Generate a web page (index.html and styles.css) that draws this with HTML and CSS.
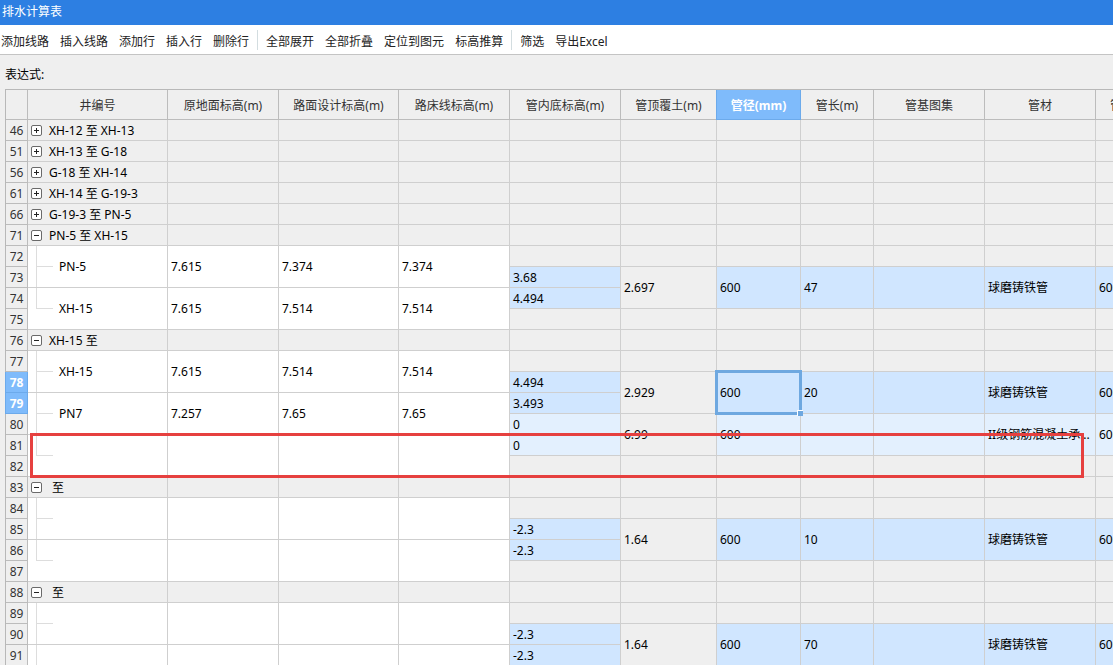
FILE: index.html
```html
<!DOCTYPE html>
<html lang="zh-CN">
<head>
    <meta charset="UTF-8">
    <meta name="viewport" content="width=device-width, initial-scale=1.0">
    <title>排水计算表</title>
    <link rel="stylesheet" href="styles.css">
</head>
<body>
    <header class="titlebar">排水计算表</header>
    <nav class="toolbar">
        <button type="button">添加线路</button>
        <button type="button">插入线路</button>
        <button type="button">添加行</button>
        <button type="button">插入行</button>
        <button type="button">删除行</button>
        <span class="separator"></span>
        <button type="button">全部展开</button>
        <button type="button">全部折叠</button>
        <button type="button">定位到图元</button>
        <button type="button">标高推算</button>
        <span class="separator"></span>
        <button type="button">筛选</button>
        <button type="button">导出Excel</button>
    </nav>
    <div class="expression">表达式:</div>
    <main class="sheet">
        <table class="grid">
            <colgroup>
                <col class="col-num">
                <col class="col-name">
                <col class="col-wide">
                <col class="col-design">
                <col class="col-wide">
                <col class="col-wide">
                <col class="col-cover">
                <col class="col-diameter">
                <col class="col-length">
                <col class="col-wide">
                <col class="col-wide">
                <col class="col-wide">
            </colgroup>
            <thead>
                <tr>
                    <th></th>
                    <th scope="col">井编号</th>
                    <th scope="col">原地面标高(m)</th>
                    <th scope="col">路面设计标高(m)</th>
                    <th scope="col">路床线标高(m)</th>
                    <th scope="col">管内底标高(m)</th>
                    <th scope="col">管顶覆土(m)</th>
                    <th scope="col" class="active">管径(mm)</th>
                    <th scope="col">管长(m)</th>
                    <th scope="col">管基图集</th>
                    <th scope="col">管材</th>
                    <th scope="col" class="cut">管</th>
                </tr>
            </thead>
            <tbody>
                <tr><th scope="row">46</th><td class="group"><button type="button" class="toggle plus" aria-label="展开"></button>XH-12 至 XH-13</td><td></td><td></td><td></td><td></td><td></td><td></td><td></td><td></td><td></td><td></td></tr>
                <tr><th scope="row">51</th><td class="group"><button type="button" class="toggle plus" aria-label="展开"></button>XH-13 至 G-18</td><td></td><td></td><td></td><td></td><td></td><td></td><td></td><td></td><td></td><td></td></tr>
                <tr><th scope="row">56</th><td class="group"><button type="button" class="toggle plus" aria-label="展开"></button>G-18 至 XH-14</td><td></td><td></td><td></td><td></td><td></td><td></td><td></td><td></td><td></td><td></td></tr>
                <tr><th scope="row">61</th><td class="group"><button type="button" class="toggle plus" aria-label="展开"></button>XH-14 至 G-19-3</td><td></td><td></td><td></td><td></td><td></td><td></td><td></td><td></td><td></td><td></td></tr>
                <tr><th scope="row">66</th><td class="group"><button type="button" class="toggle plus" aria-label="展开"></button>G-19-3 至 PN-5</td><td></td><td></td><td></td><td></td><td></td><td></td><td></td><td></td><td></td><td></td></tr>

                <tr><th scope="row">71</th><td class="group"><button type="button" class="toggle" aria-label="折叠"></button>PN-5 至 XH-15</td><td></td><td></td><td></td><td></td><td></td><td></td><td></td><td></td><td></td><td></td></tr>
                <tr>
                    <th scope="row">72</th>
                    <td class="node" rowspan="2">PN-5</td>
                    <td class="level" rowspan="2">7.615</td>
                    <td class="level" rowspan="2">7.374</td>
                    <td class="level" rowspan="2">7.374</td>
                    <td></td><td></td><td></td><td></td><td></td><td></td><td></td>
                </tr>
                <tr>
                    <th scope="row">73</th>
                    <td class="pipe">3.68</td>
                    <td rowspan="2">2.697</td>
                    <td class="pipe" rowspan="2">600</td>
                    <td class="pipe" rowspan="2">47</td>
                    <td class="pipe" rowspan="2"></td>
                    <td class="pipe" rowspan="2">球磨铸铁管</td>
                    <td class="pipe" rowspan="2">600</td>
                </tr>
                <tr>
                    <th scope="row">74</th>
                    <td class="node last" rowspan="2">XH-15</td>
                    <td class="level" rowspan="2">7.615</td>
                    <td class="level" rowspan="2">7.514</td>
                    <td class="level" rowspan="2">7.514</td>
                    <td class="pipe">4.494</td>
                </tr>
                <tr><th scope="row">75</th><td></td><td></td><td></td><td></td><td></td><td></td><td></td></tr>

                <tr><th scope="row">76</th><td class="group"><button type="button" class="toggle" aria-label="折叠"></button>XH-15 至</td><td></td><td></td><td></td><td></td><td></td><td></td><td></td><td></td><td></td><td></td></tr>
                <tr>
                    <th scope="row">77</th>
                    <td class="node" rowspan="2">XH-15</td>
                    <td class="level" rowspan="2">7.615</td>
                    <td class="level" rowspan="2">7.514</td>
                    <td class="level" rowspan="2">7.514</td>
                    <td></td><td></td><td></td><td></td><td></td><td></td><td></td>
                </tr>
                <tr>
                    <th scope="row" class="active">78</th>
                    <td class="pipe">4.494</td>
                    <td rowspan="2">2.929</td>
                    <td class="pipe selected" rowspan="2">600<span class="selection"></span></td>
                    <td class="pipe" rowspan="2">20</td>
                    <td class="pipe" rowspan="2"></td>
                    <td class="pipe" rowspan="2">球磨铸铁管</td>
                    <td class="pipe" rowspan="2">600</td>
                </tr>
                <tr>
                    <th scope="row" class="active">79</th>
                    <td class="node" rowspan="2">PN7</td>
                    <td class="level" rowspan="2">7.257</td>
                    <td class="level" rowspan="2">7.65</td>
                    <td class="level" rowspan="2">7.65</td>
                    <td class="pipe">3.493</td>
                </tr>
                <tr>
                    <th scope="row">80</th>
                    <td class="pipe pale">0</td>
                    <td rowspan="2">6.99</td>
                    <td class="pipe pale" rowspan="2">600</td>
                    <td class="pipe pale" rowspan="2"></td>
                    <td class="pipe pale" rowspan="2"></td>
                    <td class="pipe pale" rowspan="2">II级钢筋混凝土承...</td>
                    <td class="pipe pale" rowspan="2">600</td>
                </tr>
                <tr>
                    <th scope="row">81</th>
                    <td class="node last" rowspan="2"></td>
                    <td class="level" rowspan="2"></td>
                    <td class="level" rowspan="2"></td>
                    <td class="level" rowspan="2"></td>
                    <td class="pipe pale">0</td>
                </tr>
                <tr><th scope="row">82</th><td></td><td></td><td></td><td></td><td></td><td></td><td></td></tr>

                <tr><th scope="row">83</th><td class="group"><button type="button" class="toggle" aria-label="折叠"></button>&nbsp;至</td><td></td><td></td><td></td><td></td><td></td><td></td><td></td><td></td><td></td><td></td></tr>
                <tr>
                    <th scope="row">84</th>
                    <td class="node" rowspan="2"></td>
                    <td class="level" rowspan="2"></td>
                    <td class="level" rowspan="2"></td>
                    <td class="level" rowspan="2"></td>
                    <td></td><td></td><td></td><td></td><td></td><td></td><td></td>
                </tr>
                <tr>
                    <th scope="row">85</th>
                    <td class="pipe">-2.3</td>
                    <td rowspan="2">1.64</td>
                    <td class="pipe" rowspan="2">600</td>
                    <td class="pipe" rowspan="2">10</td>
                    <td class="pipe" rowspan="2"></td>
                    <td class="pipe" rowspan="2">球磨铸铁管</td>
                    <td class="pipe" rowspan="2">600</td>
                </tr>
                <tr>
                    <th scope="row">86</th>
                    <td class="node last" rowspan="2"></td>
                    <td class="level" rowspan="2"></td>
                    <td class="level" rowspan="2"></td>
                    <td class="level" rowspan="2"></td>
                    <td class="pipe">-2.3</td>
                </tr>
                <tr><th scope="row">87</th><td></td><td></td><td></td><td></td><td></td><td></td><td></td></tr>

                <tr><th scope="row">88</th><td class="group"><button type="button" class="toggle" aria-label="折叠"></button>&nbsp;至</td><td></td><td></td><td></td><td></td><td></td><td></td><td></td><td></td><td></td><td></td></tr>
                <tr>
                    <th scope="row">89</th>
                    <td class="node" rowspan="2"></td>
                    <td class="level" rowspan="2"></td>
                    <td class="level" rowspan="2"></td>
                    <td class="level" rowspan="2"></td>
                    <td></td><td></td><td></td><td></td><td></td><td></td><td></td>
                </tr>
                <tr>
                    <th scope="row">90</th>
                    <td class="pipe">-2.3</td>
                    <td rowspan="2">1.64</td>
                    <td class="pipe" rowspan="2">600</td>
                    <td class="pipe" rowspan="2">70</td>
                    <td class="pipe" rowspan="2"></td>
                    <td class="pipe" rowspan="2">球磨铸铁管</td>
                    <td class="pipe" rowspan="2">600</td>
                </tr>
                <tr>
                    <th scope="row">91</th>
                    <td class="node" rowspan="2"></td>
                    <td class="level" rowspan="2"></td>
                    <td class="level" rowspan="2"></td>
                    <td class="level" rowspan="2"></td>
                    <td class="pipe">-2.3</td>
                </tr>
                <tr><th scope="row">92</th><td></td><td></td><td></td><td></td><td></td><td></td><td></td></tr>
            </tbody>
        </table>
        <div class="marker"></div>
    </main>
</body>
</html>
```

FILE: styles.css
```css
* {
    box-sizing: border-box;
}

body {
    margin: 0;
    height: 100vh;
    display: flex;
    flex-direction: column;
    overflow: hidden;
    background-color: #efefef;
    color: #000000;
    font-family: "Noto Sans", "Noto Sans CJK SC", sans-serif;
    font-size: 12px;
    line-height: 20px;
}

button {
    padding: 0;
    border: none;
    background: none;
    color: inherit;
    font: inherit;
    white-space: nowrap;
}

.titlebar {
    flex: none;
    height: 25px;
    padding: 2px;
    background-color: #2d7fe2;
    color: #ffffff;
}

.toolbar {
    flex: none;
    display: flex;
    align-items: center;
    gap: 11px;
    height: 30px;
    padding: 0 1px;
    background-color: #ffffff;
    border-bottom: 1px solid #c4c4c4;
    color: #222222;
}

.toolbar button {
    padding-top: 4px;
}

.separator {
    width: 1px;
    height: 20px;
    margin: 0 -3px;
    background-color: #d3dde0;
}

.expression {
    flex: none;
    height: 34px;
    padding: 10px 5px 0;
}

.sheet {
    flex: 1;
    min-height: 0;
    position: relative;
    margin-left: 5px;
    overflow: hidden;
}

.grid {
    table-layout: fixed;
    width: 100%;
    border-collapse: separate;
    border-spacing: 0;
    border-top: 1px solid #b8b8b8;
    border-left: 1px solid #b8b8b8;
    line-height: 18px;
}

.col-num {
    width: 22px;
}

.col-name {
    width: 140px;
}

.col-wide {
    width: 111px;
}

.col-design {
    width: 120px;
}

.col-cover {
    width: 96px;
}

.col-diameter {
    width: 84px;
}

.col-length {
    width: 73px;
}

.grid th,
.grid td {
    height: 21px;
    padding: 2px 3px 0;
    border-right: 1px solid #cfcfcf;
    border-bottom: 1px solid #cfcfcf;
    text-align: left;
    vertical-align: middle;
    white-space: nowrap;
    overflow: hidden;
}

.grid td[rowspan] {
    padding-top: 0;
}

.grid th {
    padding: 2px 0 0;
    border-color: #bcbcbc;
    color: #333333;
    font-weight: normal;
    text-align: center;
}

.grid thead th {
    height: 30px;
}

.grid th.cut {
    padding-left: 14px;
    text-align: left;
}

.grid th.active {
    background-color: #7fbbfb;
    border-color: #6caaeb;
    box-shadow: -1px 0 #6caaeb;
    color: #ffffff;
    font-weight: bold;
}

.grid .level {
    background-color: #ffffff;
}

.grid .pipe {
    background-color: #d0e6ff;
}

.grid .pale {
    background-color: #e3f0fe;
}

/* tree column */
.toggle {
    position: relative;
    width: 11px;
    height: 11px;
    margin-right: 7px;
    vertical-align: 0;
    border: 1px solid #6a6a6a;
    border-radius: 2px;
    background-color: #ffffff;
}

.toggle::before,
.toggle.plus::after {
    content: "";
    position: absolute;
    top: 4px;
    left: 2px;
    width: 5px;
    height: 1px;
    background-color: #222222;
}

.toggle.plus::after {
    top: 2px;
    left: 4px;
    width: 1px;
    height: 5px;
}

.grid .node {
    padding-left: 31px;
    background-color: #ffffff;
    background-image: linear-gradient(#dddddd, #dddddd), linear-gradient(#dddddd, #dddddd);
    background-repeat: no-repeat;
    background-position: 8px 0, 8px 50%;
    background-size: 1px 100%, 17px 1px;
}

.grid .node.last {
    background-size: 1px 50%, 17px 1px;
}

/* current cell frame with its drag handle */
.grid .selected {
    position: relative;
    overflow: visible;
}

.selection {
    position: absolute;
    inset: -2px;
    z-index: 1;
    border: 3px solid #6ea8e0;
}

.selection::after {
    content: "";
    position: absolute;
    right: -4px;
    bottom: -4px;
    width: 5px;
    height: 5px;
    border-top: 1px solid #ffffff;
    border-left: 1px solid #ffffff;
    background-color: #6ea8e0;
}

.marker {
    position: absolute;
    top: 344px;
    left: 25px;
    width: 1054px;
    height: 45px;
    z-index: 2;
    border: 3px solid #e6403f;
    pointer-events: none;
}
```
